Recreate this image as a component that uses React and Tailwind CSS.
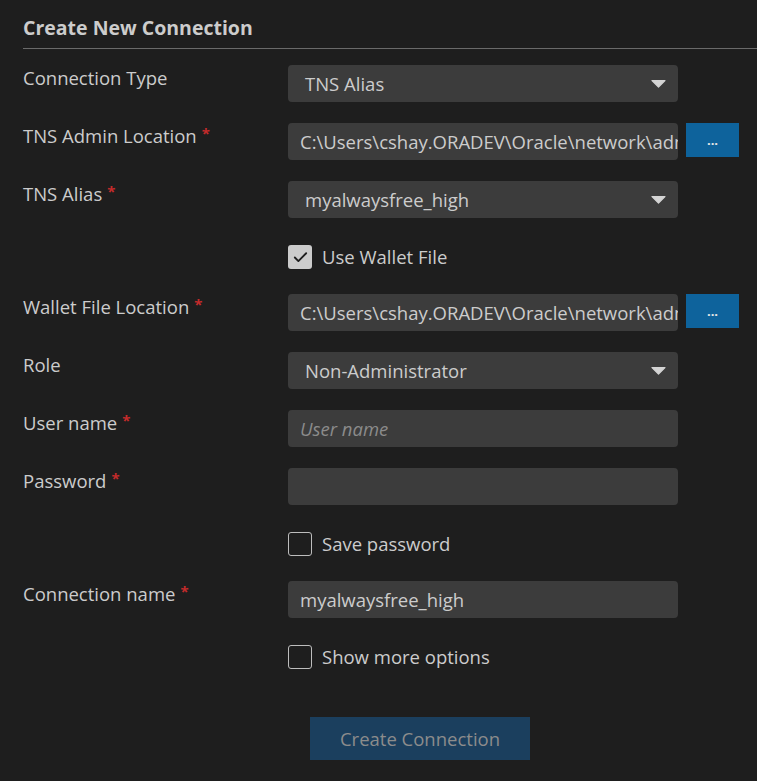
import { Check } from 'lucide-react'

const font = { fontFamily: '"Open Sans", "Noto Sans", sans-serif' }

function Label({ children, required }) {
  return (
    <div className="text-[18.5px] leading-[26px] text-[#cccccc]">
      {children}
      {required ? <span className="relative -top-[4px] ml-[5px] text-[15px] font-bold text-[#c42b2b]">*</span> : null}
    </div>
  )
}

function Arrow() {
  return (
    <svg width="15" height="9" viewBox="0 0 15 9" className="shrink-0">
      <path d="M1 1.5 L14 1.5 L7.5 8 Z" fill="#d4d4d4" stroke="#d4d4d4" strokeWidth="1.2" strokeLinejoin="round" />
    </svg>
  )
}

function Select({ value }) {
  return (
    <div className="flex h-[37px] w-[390px] items-center justify-between rounded-[4px] bg-[#3c3c3c] pl-[17px] pr-[12px] text-[18.5px] text-[#cccccc]">
      <span>{value}</span>
      <Arrow />
    </div>
  )
}

function TextBox({ value, placeholder }) {
  return (
    <div className="flex h-[37px] w-[390px] items-center overflow-hidden whitespace-nowrap rounded-[4px] bg-[#3c3c3c] pl-[12px] pr-[2px] text-[18.5px] text-[#cccccc]">
      {value ? <span>{value}</span> : <span className="italic text-[#8b8b8b]">{placeholder}</span>}
    </div>
  )
}

function BrowseButton() {
  return (
    <div className="ml-[8px] flex h-[34px] w-[53px] items-center justify-center bg-[#0e639c] text-[13px] font-bold leading-none text-[#e8e8e8]">
      ...
    </div>
  )
}

function Row({ label, required, children }) {
  return (
    <div className="flex items-start">
      <div className="w-[265px] shrink-0">
        <Label required={required}>{label}</Label>
      </div>
      <div className="flex items-start">{children}</div>
    </div>
  )
}

function CheckRow({ label, checked }) {
  return (
    <div className="flex h-[34px] items-center pl-[265px] pt-[2px]">
      <div
        className={`flex h-[24px] w-[24px] items-center justify-center rounded-[3px] ${checked ? 'bg-[#cccccc]' : 'border border-[#bdbdbd]'}`}
      >
        {checked ? <Check className="h-[17px] w-[17px] text-[#1e1e1e]" strokeWidth={2.6} /> : null}
      </div>
      <span className="ml-[10px] text-[18.5px] text-[#cccccc]">{label}</span>
    </div>
  )
}

const walletPath = 'C:\\Users\\cshay.ORADEV\\Oracle\\network\\admin'

export default function App() {
  return (
    <div className="min-h-[781px] w-[757px] overflow-hidden bg-[#1e1e1e] pl-[23px]" style={font}>
      <div className="flex h-[49px] items-end border-b border-[#6a6a6a] pb-[7px]">
        <h1 className="text-[19.5px] font-bold leading-[26px] text-[#cccccc]">Create New Connection</h1>
      </div>

      <div className="mt-[16px] flex flex-col gap-[21px]">
        <Row label="Connection Type">
          <Select value="TNS Alias" />
        </Row>
        <Row label="TNS Admin Location" required>
          <TextBox value={walletPath} />
          <BrowseButton />
        </Row>
        <Row label="TNS Alias" required>
          <Select value="myalwaysfree_high" />
        </Row>
        <CheckRow label="Use Wallet File" checked />
        <Row label="Wallet File Location" required>
          <TextBox value={walletPath} />
          <BrowseButton />
        </Row>
        <Row label="Role">
          <Select value="Non-Administrator" />
        </Row>
        <Row label="User name" required>
          <TextBox placeholder="User name" />
        </Row>
        <Row label="Password" required>
          <TextBox />
        </Row>
        <CheckRow label="Save password" />
        <Row label="Connection name" required>
          <TextBox value="myalwaysfree_high" />
        </Row>
        <CheckRow label="Show more options" />
      </div>

      <div className="mt-[44px] pl-[287px]">
        <button
          type="button"
          className="h-[43px] w-[220px] bg-[#1b3f5e] text-[18.5px] text-[#8c8c8c]"
        >
          Create Connection
        </button>
      </div>
    </div>
  )
}
